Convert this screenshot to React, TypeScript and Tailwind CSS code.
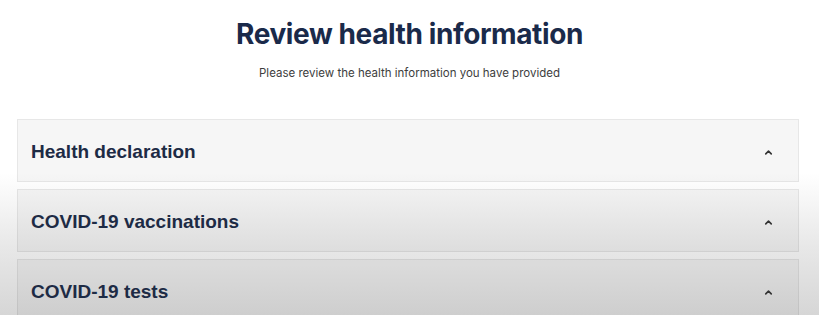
import { ChevronUp } from 'lucide-react';

const sections = ['Health declaration', 'COVID-19 vaccinations', 'COVID-19 tests'];

/** One collapsed accordion row */
function SectionRow({ title }: { title: string }) {
  return (
    <div className="flex h-[63px] items-center justify-between border border-black/[0.06] bg-black/[0.035] pl-[13px] pr-[24px] pt-[3px]">
      <span className="font-['Liberation_Sans',Arial,sans-serif] text-[19px] font-bold text-[#1d2b45]">
        {title}
      </span>
      <ChevronUp className="h-[11px] w-[11px] text-[#333]" strokeWidth={3.5} />
    </div>
  );
}

export default function App() {
  return (
    <div className="h-[315px] w-[819px] overflow-hidden bg-[linear-gradient(to_bottom,#ffffff_0%,#ffffff_55%,#e8e8e8_78%,#d6d6d6_100%)] font-['Inter',sans-serif]">
      {/* Header */}
      <div className="flex flex-col items-center pt-[15px]">
        <h1 className="text-[28px] font-bold leading-[38px] tracking-[-0.4px] text-[#1a2a4a]">
          Review health information
        </h1>
        <p className="mt-[13px] text-[11.5px] leading-[14px] text-[#3d3d3d]">
          Please review the health information you have provided
        </p>
      </div>

      {/* Sections */}
      <div className="mx-[17px] mt-[39px] flex flex-col gap-[7px] pr-[3px]">
        {sections.map((s) => (
          <SectionRow key={s} title={s} />
        ))}
      </div>
    </div>
  );
}
